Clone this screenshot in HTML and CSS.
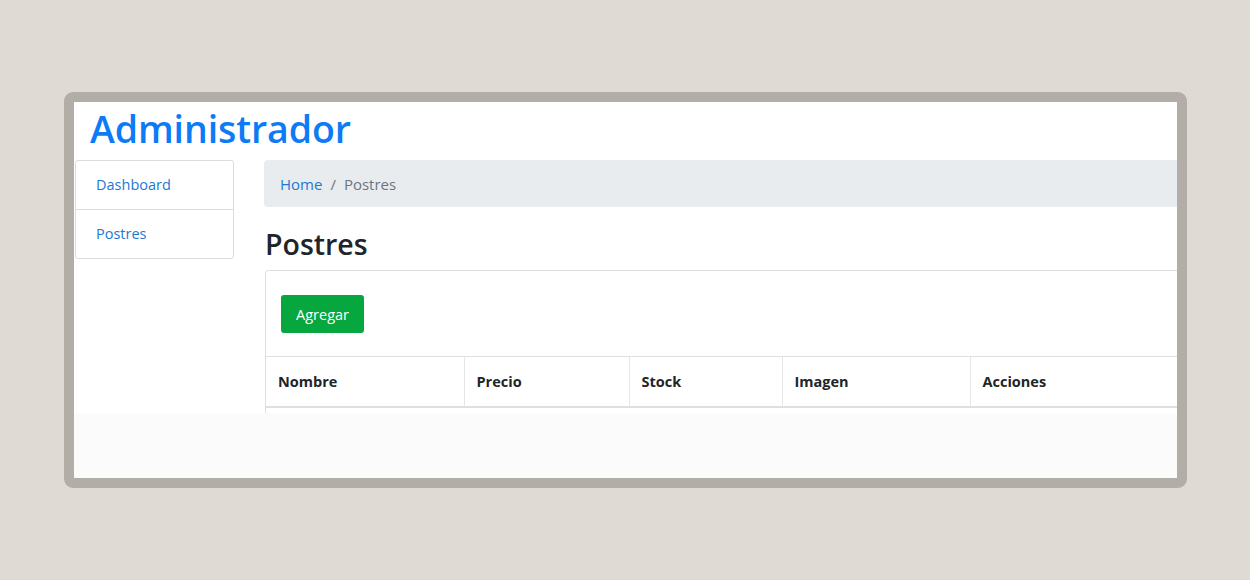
FILE: index.html
```html
<!DOCTYPE html>
<html lang="es">
<head>
<meta charset="utf-8">
<title>Administrador</title>
<link rel="stylesheet" href="styles.css">
</head>
<body>
<div class="frame">
  <div class="page">
    <h1 class="brand">Administrador</h1>
    <div class="layout">
      <nav class="list-group">
        <a class="list-item" href="#">Dashboard</a>
        <a class="list-item" href="#">Postres</a>
      </nav>
      <main class="main">
        <div class="breadcrumb">
          <a class="crumb-link" href="#">Home</a>
          <span class="crumb-sep">/</span>
          <span class="crumb-active">Postres</span>
        </div>
        <h2 class="title">Postres</h2>
        <div class="card">
          <div class="card-body">
            <button class="btn-success">Agregar</button>
          </div>
          <table class="table">
            <thead>
              <tr>
                <th class="c1">Nombre</th>
                <th class="c2">Precio</th>
                <th class="c3">Stock</th>
                <th class="c4">Imagen</th>
                <th class="c5">Acciones</th>
              </tr>
            </thead>
          </table>
        </div>
      </main>
    </div>
  </div>
</div>
</body>
</html>
```
FILE: styles.css
```css
* { box-sizing: border-box; }
html, body { margin: 0; padding: 0; }
body {
  background: #dfdad4;
  font-family: "Open Sans", "Noto Sans", sans-serif;
  height: 580px;
  overflow: hidden;
  padding-top: 92px;
  padding-left: 64px;
}
.frame {
  width: 1123px;
  height: 396px;
  border: 10px solid #b2ada7;
  border-radius: 9px;
  background: #fbfbfb;
  overflow: hidden;
}
.page {
  background: #fff;
  height: 311px;
  overflow: hidden;
}
.brand {
  margin: 0;
  height: 58px;
  padding: 2px 0 0 16px;
  font-size: 37.5px;
  font-weight: 600;
  line-height: 50px;
  color: #0d7bf5;
  letter-spacing: -0.1px;
}
.layout {
  display: flex;
  gap: 30px;
  padding-left: 1px;
}
.list-group {
  width: 159px;
  flex: none;
  display: flex;
  flex-direction: column;
  border: 1px solid #dcdcdc;
  border-radius: 3px;
  align-self: flex-start;
}
.list-item {
  display: block;
  height: 48px;
  padding: 12px 20px;
  font-size: 14.5px;
  line-height: 24px;
  color: #1f78d1;
  text-decoration: none;
}
.list-item + .list-item {
  height: 49px;
  border-top: 1px solid #dcdcdc;
}
.main {
  flex: none;
  width: 1000px;
}
.breadcrumb {
  height: 47px;
  background: #e8ecef;
  border-radius: 4px;
  padding: 12px 16px;
  font-size: 15px;
  line-height: 24px;
  display: flex;
  gap: 8px;
}
.crumb-link { color: #1f78d1; text-decoration: none; }
.crumb-sep, .crumb-active { color: #6c757d; }
.title {
  margin: 0;
  height: 63px;
  padding-top: 17px;
  padding-left: 1px;
  font-size: 28.5px;
  font-weight: 600;
  line-height: 40px;
  color: #212529;
}
.card {
  margin-left: 1px;
  border: 1px solid #dfdfdf;
  border-radius: 3px;
  height: 200px;
}
.card-body {
  padding: 24px 15px 23px;
}
.btn-success {
  display: block;
  width: 83px;
  height: 38px;
  background: #06a73f;
  border: none;
  border-radius: 3px;
  color: #fff;
  font-family: inherit;
  font-size: 14.5px;
  padding: 0;
}
.table {
  border-collapse: collapse;
  width: 100%;
}
.table th {
  text-align: left;
  height: 50px;
  padding: 1px 12px 0;
  font-size: 14.5px;
  font-weight: 700;
  color: #212529;
  border-top: 1px solid #dfdfdf;
  border-bottom: 2px solid #dfdfdf;
  border-left: 1px solid #e6e6e6;
}
.table th.c1 { border-left: none; width: 198px; }
.table th.c2 { width: 165px; }
.table th.c3 { width: 153px; }
.table th.c4 { width: 188px; }
```
